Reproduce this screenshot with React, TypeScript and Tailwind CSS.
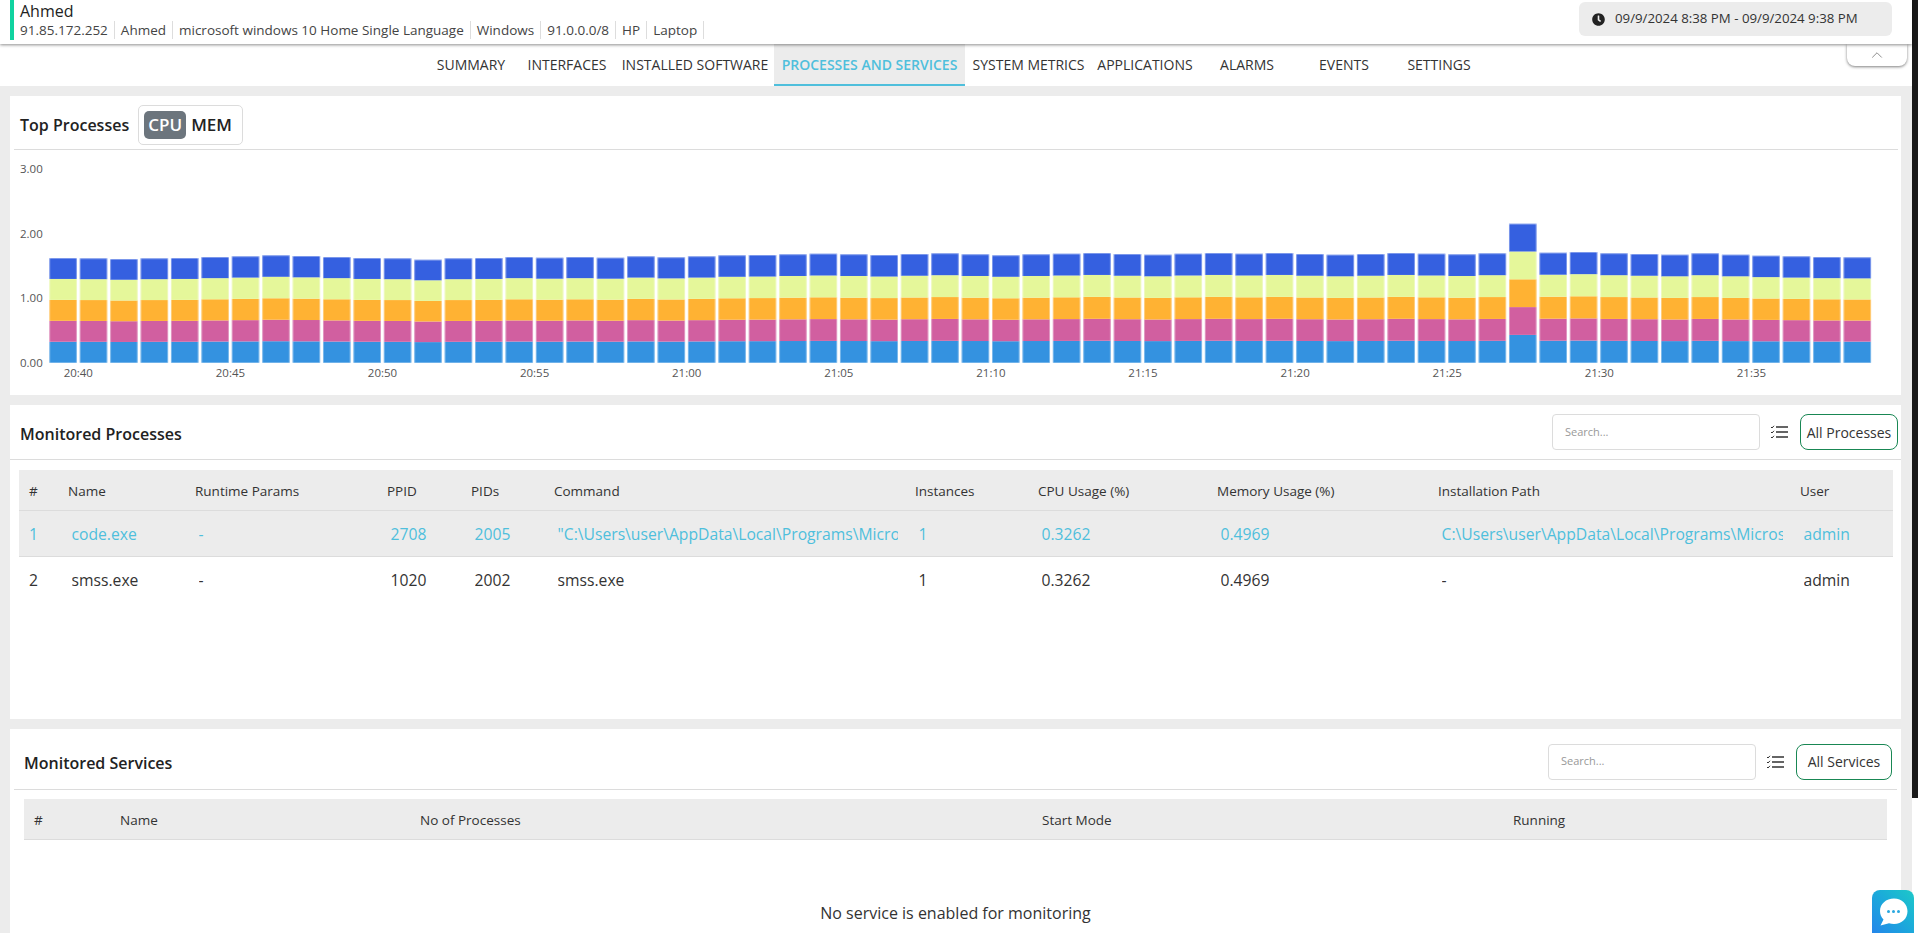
import { ChevronUp } from "lucide-react"
import { FaClock } from "react-icons/fa"

const tabs = [
  { label: "SUMMARY", w: "w-[94px]" },
  { label: "INTERFACES", w: "w-[98px]" },
  { label: "INSTALLED SOFTWARE", w: "w-[158px]" },
  { label: "PROCESSES AND SERVICES", w: "w-[191px]", active: true },
  { label: "SYSTEM METRICS", w: "w-[127px]" },
  { label: "APPLICATIONS", w: "w-[106px]" },
  { label: "ALARMS", w: "w-[98px]" },
  { label: "EVENTS", w: "w-[96px]" },
  { label: "SETTINGS", w: "w-[94px]" },
]

const meta = ["91.85.172.252", "Ahmed", "microsoft windows 10 Home Single Language", "Windows", "91.0.0.0/8", "HP", "Laptop"]

// top edge of every stacked bar, read off the chart in page pixels
const barTops = [
  258, 258.3, 259, 258.3, 258, 257, 256.3, 255.3, 256, 257, 258, 258.3, 259.7, 258.3, 258, 257, 257.7, 257, 257.7, 256.3,
  257.3, 256.3, 255.3, 255, 254.3, 253.7, 254.3, 255, 254, 253.3, 254.3, 255.3, 254.3, 253.7, 253, 254, 254.7, 253.7, 253, 253.7,
  253, 254, 254.7, 254, 253, 253.7, 254.3, 253.3, 223.7, 252.7, 252, 253.3, 254, 254.7, 253.3, 254.7, 255.7, 256.3, 257, 257.3,
]
const segColors = ["#3492e0", "#d15fa0", "#ffb233", "#e5f79a", "#3560e0"]
const baseline = 362.7

const processCols = "grid-cols-[39px_127px_192px_84px_83px_361px_123px_179px_221px_362px_103px]"
const serviceCols = "grid-cols-[86px_300px_622px_471px_384px]"

const processHead = ["#", "Name", "Runtime Params", "PPID", "PIDs", "Command", "Instances", "CPU Usage (%)", "Memory Usage (%)", "Installation Path", "User"]
const processRows = [
  ["1", "code.exe", "-", "2708", "2005", '"C:\\Users\\user\\AppData\\Local\\Programs\\Microsoft VS Code\\Code.exe"', "1", "0.3262", "0.4969", "C:\\Users\\user\\AppData\\Local\\Programs\\Microsoft VS Code", "admin"],
  ["2", "smss.exe", "-", "1020", "2002", "smss.exe", "1", "0.3262", "0.4969", "-", "admin"],
]

function ListIcon() {
  return (
    <svg width="18" height="14" viewBox="0 0 18 14" fill="none" stroke="#333" className="shrink-0">
      <path d="M6 2h12M6 7h12M6 12h12" strokeWidth="1.3" />
      <path d="M1 2l1 1 2-2.2M1 7l1 1 2-2.2M1 12l1 1 2-2.2" strokeWidth="1" />
    </svg>
  )
}

function ChatIcon() {
  return (
    <svg width="30" height="30" viewBox="0 0 30 30">
      <path d="M16 1.5C8 1.5 2 7 2 14c0 3.5 1.3 6.3 3.5 8.5L2.5 28.5l8.5-2.2c1.6.5 3.2.7 5 .7 8 0 13.5-5.6 13.5-12.7S24 1.5 16 1.5z" fill="#fff" />
      <circle cx="10.5" cy="14.5" r="1.5" fill="#2aa8e0" />
      <circle cx="15.5" cy="14.5" r="1.5" fill="#2aa8e0" />
      <circle cx="20.5" cy="14.5" r="1.5" fill="#2aa8e0" />
    </svg>
  )
}

function BarChart() {
  return (
    <svg width="1891" height="245" viewBox="10 150 1891 245" className="block">
      {[["3.00", 173], ["2.00", 238], ["1.00", 302], ["0.00", 367]].map(([t, y]) => (
        <text key={t} x="20" y={y} fontSize="11.5" fill="#555" fontFamily="Open Sans, sans-serif">{t}</text>
      ))}
      {barTops.map((top, i) => {
        const x = 49.3 + i * 30.41
        const h = (baseline - top) / 5
        return (
          <g key={i}>
            {segColors.map((c, s) => {
              const y = baseline - h * (s + 1)
              return (
                <g key={c}>
                  <rect x={x} y={y} width="27.6" height={h} fill={c} />
                  <path
                    d={`M${x + 0.5} ${y}V${y + h}M${x + 27.1} ${y}V${y + h}${s === 4 ? `M${x} ${y + 0.5}H${x + 27.6}` : ""}`}
                    stroke="#fff"
                    strokeOpacity="0.35"
                    fill="none"
                  />
                </g>
              )
            })}
          </g>
        )
      })}
      {Array.from({ length: 12 }, (_, i) => {
        const min = 40 + i * 5
        const label = min < 60 ? `20:${min}` : `21:${String(min - 60).padStart(2, "0")}`
        return (
          <text key={label} x={78.3 + i * 152.1} y="376.5" textAnchor="middle" fontSize="11.5" fill="#555" fontFamily="Open Sans, sans-serif">
            {label}
          </text>
        )
      })}
    </svg>
  )
}

function SearchTools({ label, btn }: { label: string; btn: string }) {
  return (
    <div className="flex items-center">
      <div className="flex h-[36px] w-[208px] items-center rounded-[4px] border border-[#dcdcdc] bg-white pl-[12px] text-[11px] text-[#999]">Search...</div>
      <div className="ml-[10px] mr-[12px]"><ListIcon /></div>
      <button type="button" className={`h-[36px] ${btn} rounded-[8px] border border-[#198754] bg-white text-[14px] text-[#333]`}>{label}</button>
    </div>
  )
}

export default function App() {
  return (
    <div className="relative flex h-[933px] w-[1918px] overflow-hidden bg-white font-['Open_Sans',sans-serif] text-[#333]">
      <div className="relative flex w-[1912px] shrink-0 flex-col bg-[#ececec]">
        <header className="relative z-10 flex h-[44px] shrink-0 items-start bg-white shadow-[0_1px_3px_rgba(0,0,0,0.45)]">
          <div className="ml-[10px] h-[40px] w-[4px] bg-[#10d3a0]" />
          <div className="ml-[6px] flex-1">
            <div className="text-[16px] leading-[22px] text-[#222]">Ahmed</div>
            <div className="mt-[-1px] flex text-[13.5px] leading-[18px] text-[#444]">
              {meta.map((m) => (
                <span key={m} className="border-r border-[#ddd] px-[6px] first:pl-0">{m}</span>
              ))}
            </div>
          </div>
          <div className="mr-[20px] mt-[2px] flex h-[34px] w-[313px] items-center whitespace-nowrap rounded-[6px] bg-[#ececec] pl-[13px] text-[13.25px] text-[#333]">
            <FaClock className="mr-[10px] h-[13px] w-[13px] text-[#222]" />
            09/9/2024 8:38 PM - 09/9/2024 9:38 PM
          </div>
        </header>

        <nav className="relative flex h-[42px] shrink-0 justify-center bg-white pr-[2px]">
          {tabs.map((t) => (
            <div
              key={t.label}
              className={`flex items-center justify-center whitespace-nowrap pb-[1px] text-[14px] ${t.w} ${t.active ? "border-b-2 border-[#4fbfdc] bg-[#ececec] pt-[1px] font-semibold text-[#4fbfdc]" : "text-[#333]"}`}
            >
              {t.label}
            </div>
          ))}
          <div className="absolute right-[5px] top-0 flex h-[22px] w-[60px] items-center justify-center rounded-b-[8px] bg-white shadow-[0_1px_3px_rgba(0,0,0,0.5)]">
            <ChevronUp className="h-[18px] w-[18px] text-[#777]" strokeWidth={1.1} />
          </div>
        </nav>

        <main className="flex flex-1 flex-col gap-[10px] pl-[10px] pr-[11px] pt-[10px]">
          <section className="h-[299px] shrink-0 bg-white">
            <div className="ml-[4px] mr-[3px] flex h-[54px] items-center border-b border-[#dcdcdc] pl-[6px] pt-[4px]">
              <h2 className="text-[16px] font-semibold text-[#222]">Top Processes</h2>
              <div className="ml-[9px] flex h-[40px] w-[105px] items-center rounded-[5px] border border-[#dcdcdc] pl-[5px]">
                <span className="flex h-[28px] w-[42px] items-center justify-center rounded-[5px] bg-[#6c757d] text-[17px] font-semibold text-white">CPU</span>
                <span className="ml-[5px] text-[17px] font-semibold text-[#222]">MEM</span>
              </div>
            </div>
            <BarChart />
          </section>

          <section className="h-[314px] shrink-0 bg-white">
            <div className="flex h-[55px] items-center justify-between border-b border-[#dcdcdc] pl-[10px] pr-[3px]">
              <h2 className="pt-[4px] text-[16px] font-semibold text-[#222]">Monitored Processes</h2>
              <SearchTools label="All Processes" btn="w-[98px]" />
            </div>
            <div className="ml-[9px] mr-[8px] mt-[10px]">
              <div className={`grid h-[41px] items-center border-b border-[#dcdcdc] bg-[#ececec] pt-[3px] text-[13.5px] ${processCols}`}>
                {processHead.map((h) => (
                  <div key={h} className="pl-[10px]">{h}</div>
                ))}
              </div>
              {processRows.map((row, r) => (
                <div
                  key={row[0]}
                  className={`grid h-[46px] items-center pt-[2px] text-[15.7px] ${processCols} ${r === 0 ? "border-b border-[#dcdcdc] bg-[#ececec] text-[#4fbfdc]" : "text-[#333]"}`}
                >
                  {row.map((c, i) => (
                    <div key={i} className={`pr-[7px] ${i === 0 ? "pl-[10px]" : "pl-[13.5px]"}`}>
                      <div className="overflow-hidden whitespace-nowrap">{c}</div>
                    </div>
                  ))}
                </div>
              ))}
            </div>
          </section>

          <section className="flex-1 bg-white">
            <div className="ml-[4px] mr-[4px] flex h-[61px] items-center justify-between border-b border-[#dcdcdc] pl-[10px] pr-[5px] pt-[5px]">
              <h2 className="pt-[3px] text-[16px] font-semibold text-[#222]">Monitored Services</h2>
              <SearchTools label="All Services" btn="w-[96px]" />
            </div>
            <div className="ml-[14px] mr-[14px] mt-[9px]">
              <div className={`grid h-[41px] items-center border-b border-[#dcdcdc] bg-[#ececec] pt-[3px] text-[13.5px] ${serviceCols}`}>
                {["#", "Name", "No of Processes", "Start Mode", "Running"].map((h) => (
                  <div key={h} className="pl-[10px]">{h}</div>
                ))}
              </div>
              <div className="pt-[61px] text-center text-[16px] text-[#333]">No service is enabled for monitoring</div>
            </div>
          </section>
        </main>
      </div>

      <div className="w-[6px] shrink-0">
        <div className="h-[798px] bg-[#1a1a1a]" />
      </div>

      <div className="absolute bottom-0 right-[4px] flex h-[43px] w-[42px] items-center justify-center rounded-t-[8px] bg-linear-to-tr from-[#2586ea] to-[#1fc8c8]">
        <ChatIcon />
      </div>
    </div>
  )
}
